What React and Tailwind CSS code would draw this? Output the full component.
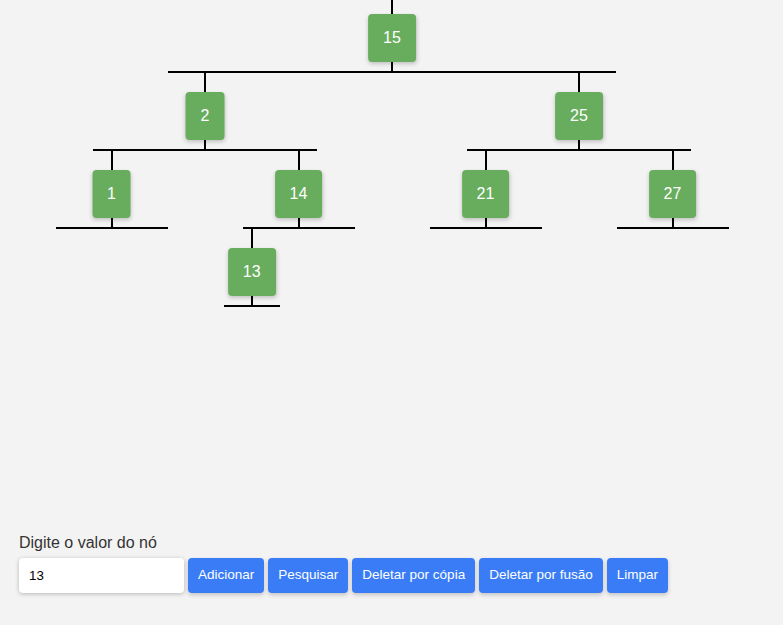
import React from "react";

const tree = {
  v: 15,
  l: {
    v: 2,
    l: { v: 1 },
    r: { v: 14, l: { v: 13 } },
  },
  r: {
    v: 25,
    l: { v: 21 },
    r: { v: 27 },
  },
};

function collect(node, cx, d, out) {
  if (!node) return;
  const top = 14 + 78 * d;
  const half = 224 / Math.pow(2, d);
  const off = 187 / Math.pow(2, d);
  out.lines.push({ left: cx - 1, top: d === 0 ? 0 : top - 19, width: 2, height: d === 0 ? top : 19 });
  out.lines.push({ left: cx - 1, top: top + 48, width: 2, height: 10 });
  out.lines.push({ left: cx - half, top: top + 57, width: half * 2, height: 2 });
  out.nodes.push({ v: node.v, cx, top });
  collect(node.l, cx - off, d + 1, out);
  collect(node.r, cx + off, d + 1, out);
}

export default function App() {
  const out = { lines: [], nodes: [] };
  collect(tree, 392, 0, out);
  const buttons = ["Adicionar", "Pesquisar", "Deletar por cópia", "Deletar por fusão", "Limpar"];
  return (
    <div
      className="min-h-screen flex flex-col bg-[#f3f3f3]"
      style={{ fontFamily: '"Liberation Sans", Arial, sans-serif' }}
    >
      <div className="relative flex-1">
        {out.lines.map((l, i) => (
          <div key={i} className="absolute bg-black" style={l} />
        ))}
        {out.nodes.map((n) => (
          <div
            key={n.v}
            className="absolute -translate-x-1/2 h-[48px] px-[15px] flex items-center justify-center rounded-[4px] bg-[#68ad5d] text-white text-[16px] shadow-[0_2px_4px_rgba(0,0,0,0.2)]"
            style={{ left: n.cx, top: n.top }}
          >
            {n.v}
          </div>
        ))}
      </div>
      <div className="px-[19px] pb-[32px]">
        <div className="text-[16px] text-[#333] leading-[18px] mb-[6px]">Digite o valor do nó</div>
        <div className="flex gap-[4px]">
          <input
            defaultValue="13"
            className="w-[165px] h-[35px] px-[10px] bg-white rounded-[4px] text-[13.33px] text-black outline-none shadow-[0_1px_4px_rgba(0,0,0,0.25)]"
          />
          {buttons.map((b) => (
            <button
              key={b}
              className="h-[35px] px-[10px] rounded-[4px] bg-[#3a7cf6] text-white text-[13.5px] shadow-[0_2px_4px_rgba(0,0,0,0.2)]"
            >
              {b}
            </button>
          ))}
        </div>
      </div>
    </div>
  );
}
